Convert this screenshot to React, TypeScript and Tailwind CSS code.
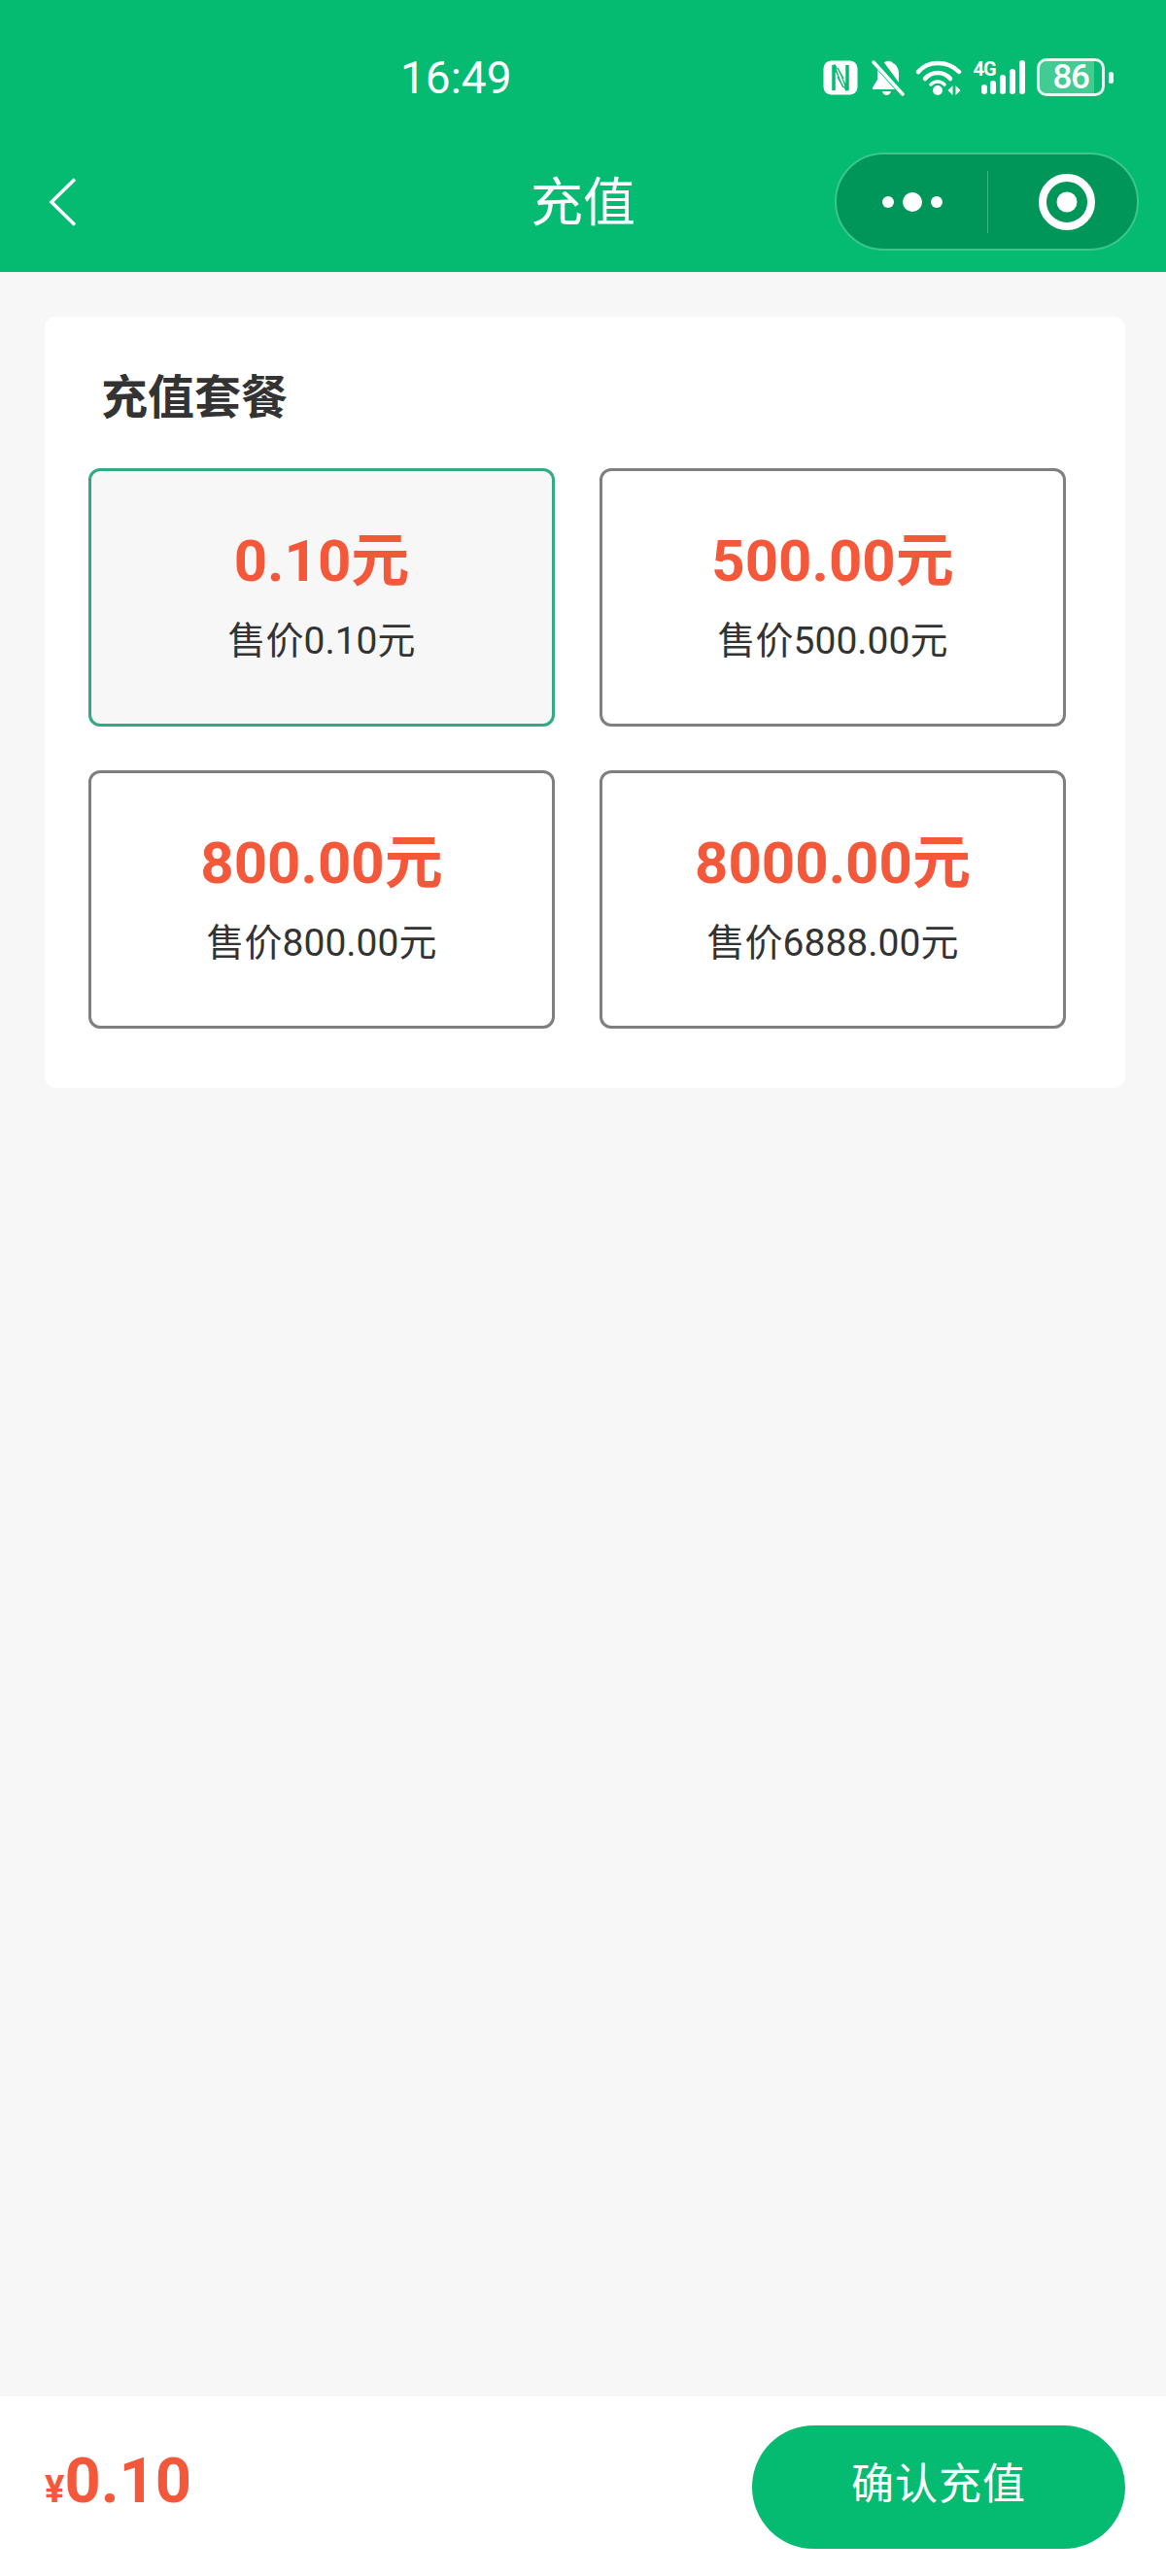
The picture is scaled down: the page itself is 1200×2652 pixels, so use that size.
import React from 'react';

const PACKAGES = [
  { id: 1, amount: '0.10元', price: '售价0.10元', active: true },
  { id: 2, amount: '500.00元', price: '售价500.00元', active: false },
  { id: 3, amount: '800.00元', price: '售价800.00元', active: false },
  { id: 4, amount: '8000.00元', price: '售价6888.00元', active: false },
];

const NfcIcon = () => (
  <svg width="36" height="36" viewBox="0 0 36 36" fill="none">
    <rect x="0.500" y="0.500" width="35" height="35" rx="8" fill="#fff" />
    <path d="M11 31V5L25 31V5" stroke="#05ba71" strokeWidth="3.500" strokeLinejoin="bevel" />
    <path d="M14.500 8.500L21.500 27" stroke="#fff" strokeWidth="2" />
    <path d="M15 17L21 28M15 8L21 19" stroke="#05ba71" strokeWidth="1.500" />
  </svg>
);

const BellOffIcon = () => (
  <svg width="36" height="38" viewBox="0 0 36 38" fill="none">
    <path d="M15 3.500C17 1 22 1 24 4 28 6 30 10 30 15V24z" fill="#fff" />
    <path d="M8 11V21L3 29V31H26z" fill="#fff" />
    <path d="M13 33h9c-.5 2.500-2.500 4-4.500 4s-4-1.500-4.500-4z" fill="#fff" />
    <path d="M3 -1l31 35" stroke="#05ba71" strokeWidth="5" />
    <path d="M4 3l30 33" stroke="#fff" strokeWidth="3.500" strokeLinecap="round" />
  </svg>
);

const WifiIcon = () => (
  <svg width="48" height="38" viewBox="0 0 48 38" fill="none">
    <path d="M3 13C13 1 33 1 45 13" stroke="#fff" strokeWidth="4.500" strokeLinecap="round" />
    <path d="M10 20C17 12 29 12 36 20" stroke="#fff" strokeWidth="4.500" strokeLinecap="round" />
    <path d="M16 26C20 22 26 22 30 26" stroke="#fff" strokeWidth="3.500" strokeLinecap="round" />
    <circle cx="23" cy="32" r="5" fill="#fff" />
    <path d="M38.500 27v10l-5-5zM41.500 27v10l5-5z" fill="#fff" />
  </svg>
);

const SignalIcon = () => (
  <div className="relative w-[54px] h-[38px]">
    <span className="absolute left-0 top-0 text-[20px] leading-[20px] font-bold text-white tracking-[-1px]">4G</span>
    <svg className="absolute left-0 top-0" width="54" height="38" viewBox="0 0 54 38" fill="#fff">
      <rect x="8" y="26" width="6" height="10" rx="3" />
      <rect x="17" y="22" width="6" height="14" rx="3" />
      <rect x="27" y="16" width="6" height="20" rx="3" />
      <rect x="37" y="10" width="6" height="26" rx="3" />
      <rect x="47" y="1" width="6" height="35" rx="3" />
    </svg>
  </div>
);

const Battery = () => (
  <div className="flex items-center gap-[4px]">
    <div className="relative w-[70px] h-[39px] rounded-[10px] border-[3px] border-white/90 overflow-hidden flex items-center justify-center">
      <div className="absolute left-0 top-0 bottom-0 w-[88%] bg-white/25" />
      <span className="relative text-[35px] leading-none font-medium text-white tracking-[-1.500px]">86</span>
    </div>
    <div className="w-[5px] h-[12px] rounded-full bg-white" />
  </div>
);

const App: React.FC = () => {
  return (
    <div className="h-screen flex flex-col bg-[#f7f7f7] font-['Roboto','Noto_Sans_CJK_SC',sans-serif]">
      {/* Status bar */}
      <div className="h-[150px] bg-[#05ba71] flex items-start pt-[57px] pl-[412px] pr-[54px] justify-between">
        <span className="text-[46px] leading-[46px] text-white">16:49</span>
        <div className="flex items-center gap-[11.500px] mt-[3px]">
          <NfcIcon />
          <BellOffIcon />
          <WifiIcon />
          <SignalIcon />
          <Battery />
        </div>
      </div>

      {/* Nav bar */}
      <div className="h-[130px] bg-[#05ba71] grid grid-cols-[1fr_auto_1fr] pt-[7px] px-[28px] items-start">
        <svg className="mt-[26px] ml-[22px]" width="30" height="50" viewBox="0 0 30 50" fill="none">
          <path d="M27 1.500 L3 25 L27 48.500" stroke="#fff" strokeWidth="3.500" />
        </svg>
        <h1 className="text-[54px] leading-[76px] mt-[15px] text-white font-normal">充值</h1>
        <div className="justify-self-end w-[313px] h-[101px] rounded-full bg-[#019659] border-[2px] border-[#3cc68e] flex items-center">
          <div className="w-[155px] flex items-center justify-center gap-[9px]">
            <span className="w-[12px] h-[12px] rounded-full bg-white" />
            <span className="w-[20px] h-[20px] rounded-full bg-white" />
            <span className="w-[12px] h-[12px] rounded-full bg-white" />
          </div>
          <div className="w-[1px] h-[64px] bg-[#3cb587]" />
          <div className="flex-1 flex items-center justify-center pl-[8px]">
            <svg width="60" height="60" viewBox="0 0 60 60" fill="none">
              <circle cx="30" cy="30" r="25" stroke="#fff" strokeWidth="8" />
              <circle cx="30" cy="30" r="10.500" fill="#fff" />
            </svg>
          </div>
        </div>
      </div>

      {/* Content */}
      <div className="flex-1 pt-[46px] pl-[46px] pr-[42px]">
        <div className="bg-white rounded-[12px] pt-[56px] pb-[61px] pl-[45px] pr-[61px]">
          <h2 className="pl-[13px] text-[48px] leading-[56px] font-bold text-[#333333]">充值套餐</h2>
          <div className="mt-[44px] grid grid-cols-2 gap-x-[46px] gap-y-[45px] auto-rows-[266px]">
            {PACKAGES.map(pkg => (
              <div
                key={pkg.id}
                className={`rounded-[12px] border-[3px] flex flex-col items-center justify-center ${
                  pkg.active ? 'border-[#2fab7f] bg-[#f7f7f7]' : 'border-[#7f7f7f] bg-white'
                }`}
              >
                <p className="text-[60px] leading-[68px] font-bold text-[#f4583a] -mt-[2px]">{pkg.amount}</p>
                <p className="mt-[24px] text-[39px] leading-[48px] text-[#333333]">{pkg.price}</p>
              </div>
            ))}
          </div>
        </div>
      </div>

      {/* Bottom bar */}
      <div className="h-[185px] bg-white pl-[46px] pr-[42px] pt-[30px] flex items-start justify-between">
        <div className="flex items-baseline mt-[22px] font-bold text-[#f4583a]">
          <span className="text-[38px] leading-[70px]">¥</span>
          <span className="text-[65px] leading-[70px]">0.10</span>
        </div>
        <button className="w-[384px] h-[127px] pb-[6px] rounded-full bg-[#05ba71] text-white text-[44px] tracking-[1px]">
          确认充值
        </button>
      </div>
    </div>
  );
};

export default App;
